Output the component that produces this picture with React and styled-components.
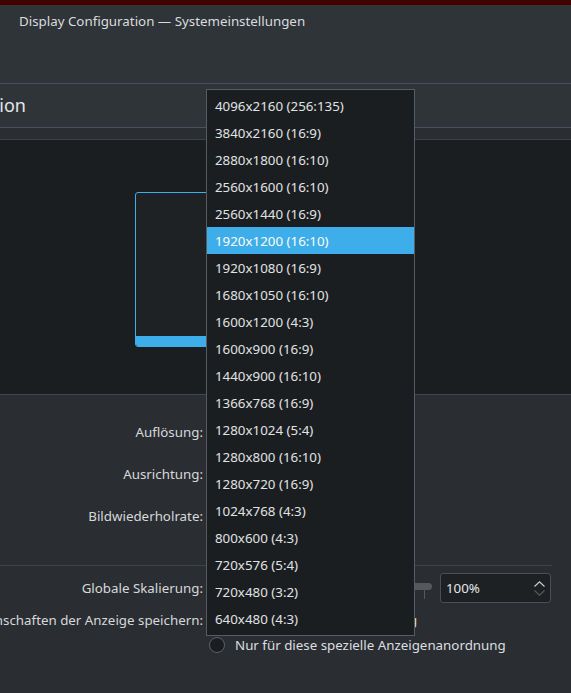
import React from 'react';
import styled, { createGlobalStyle } from 'styled-components';

const GlobalStyle = createGlobalStyle`
  html, body {
    margin: 0;
    padding: 0;
    background: #2a2e32;
    overflow: hidden;
  }
  body {
    font-family: 'Noto Sans', 'Open Sans', sans-serif;
    font-size: 13.33px;
    color: #dcdee0;
  }
`;

const Window = styled.div`
  position: relative;
  width: 571px;
  height: 693px;
  overflow: hidden;
  background: #2a2e32;
`;

const RedStrip = styled.div`
  height: 5px;
  background: #400000;
`;

const TitleBar = styled.div`
  height: 79px;
  box-sizing: border-box;
  background: #2f3438;
  border-bottom: 1px solid #4a5055;
  padding: 6px 0 0 19px;
`;

const Title = styled.div`
  font-size: 13.33px;
  line-height: 20px;
  color: #d9dbdd;
`;

const HeadingRow = styled.div`
  display: flex;
  align-items: center;
  height: 43px;
  background: #2f3438;
  border-bottom: 1px solid #4a5055;
`;

const HeadingClip = styled.div`
  flex: 0 0 26px;
  min-width: 0;
  display: flex;
  justify-content: flex-end;
  white-space: nowrap;
`;

const Heading = styled.div`
  flex: none;
  font-size: 18px;
  color: #e4e6e8;
  padding-bottom: 1px;
`;

const Band = styled.div`
  height: 11px;
  background: #2a2e32;
  border-bottom: 1px solid #3c4145;
`;

const Canvas = styled.div`
  height: 255px;
  box-sizing: border-box;
  background: #1b1e20;
  border-bottom: 1px solid #43484d;
  padding: 52px 0 0 135px;
`;

const Monitor = styled.div`
  width: 270px;
  height: 155px;
  box-sizing: border-box;
  border: 1px solid #3daee9;
  border-radius: 3px;
  background: #1f2225;
  display: flex;
  flex-direction: column;
  justify-content: flex-end;
  overflow: hidden;
`;

const MonitorBar = styled.div`
  height: 10px;
  background: #3daee9;
`;

const Form = styled.div`
  padding-top: 16px;
  display: flex;
  flex-direction: column;
`;

const Row = styled.div`
  display: flex;
  align-items: center;
  gap: 6px;
  height: ${(p) => p.h || 42}px;
  margin-top: ${(p) => p.mt || 0}px;
`;

const Label = styled.div`
  flex: 0 0 203px;
  min-width: 0;
  display: flex;
  justify-content: flex-end;
  white-space: nowrap;
  color: #d6d8da;
`;

const LabelText = styled.span`
  flex: none;
`;

const Divider = styled.div`
  width: 552px;
  height: 1px;
  background: #3e4347;
  margin-top: 28px;
`;

const Controls = styled.div`
  display: flex;
  align-items: center;
  gap: 8px;
`;

const Slider = styled.div`
  width: 223px;
  height: 30px;
  padding-top: 10px;
  box-sizing: border-box;
  display: flex;
  flex-direction: column;
`;

const Groove = styled.div`
  height: 7px;
  border-radius: 4px;
  background: #55595d;
`;

const Ticks = styled.div`
  display: flex;
  justify-content: space-between;
  padding: 0 7px 0 8px;
`;

const Tick = styled.div`
  width: 1px;
  height: 9px;
  background: #55595d;
`;

const SpinBox = styled.div`
  width: 111px;
  height: 30px;
  box-sizing: border-box;
  border: 1px solid #4a4f54;
  border-radius: 3px;
  background: #1e2124;
  display: flex;
  align-items: center;
  justify-content: space-between;
  padding: 0 5px;
  color: #e4e6e8;
`;

const Arrows = styled.div`
  display: flex;
  flex-direction: column;
  gap: 3px;
`;

const Radio = styled.label`
  flex: none;
  display: flex;
  align-items: center;
  gap: 10px;
  white-space: nowrap;
  color: #dcdee0;
`;

const RadioDot = styled.span`
  width: 16px;
  height: 16px;
  box-sizing: border-box;
  border-radius: 50%;
  border: 1px solid #5d6165;
  background: #1b1e20;
`;

const Popup = styled.div`
  position: absolute;
  left: 206px;
  top: 89px;
  width: 209px;
  box-sizing: border-box;
  background: #1b1e20;
  border: 1px solid #575c61;
  padding: 2px 0 3px;
`;

const Item = styled.div`
  height: 27px;
  display: flex;
  align-items: center;
  padding-left: 8px;
  white-space: nowrap;
  color: ${(p) => (p.selected ? '#fcfcfc' : '#e0e2e4')};
  background: ${(p) => (p.selected ? '#3daee9' : 'transparent')};
`;

const resolutions = [
  '4096x2160 (256:135)',
  '3840x2160 (16:9)',
  '2880x1800 (16:10)',
  '2560x1600 (16:10)',
  '2560x1440 (16:9)',
  '1920x1200 (16:10)',
  '1920x1080 (16:9)',
  '1680x1050 (16:10)',
  '1600x1200 (4:3)',
  '1600x900 (16:9)',
  '1440x900 (16:10)',
  '1366x768 (16:9)',
  '1280x1024 (5:4)',
  '1280x800 (16:10)',
  '1280x720 (16:9)',
  '1024x768 (4:3)',
  '800x600 (4:3)',
  '720x576 (5:4)',
  '720x480 (3:2)',
  '640x480 (4:3)',
];

const Chevron = ({ up, color }) => (
  <svg width="11" height="6" viewBox="0 0 11 6">
    <path
      d={up ? 'M0.5 5.5 L5.5 0.8 L10.5 5.5' : 'M0.5 0.5 L5.5 5.2 L10.5 0.5'}
      fill="none"
      stroke={color}
      strokeWidth="1.2"
    />
  </svg>
);

function App() {
  return (
    <>
      <GlobalStyle />
      <Window>
        <RedStrip />
        <TitleBar>
          <Title>Display Configuration — Systemeinstellungen</Title>
        </TitleBar>
        <HeadingRow>
          <HeadingClip>
            <Heading>Display Configuration</Heading>
          </HeadingClip>
        </HeadingRow>
        <Band />
        <Canvas>
          <Monitor>
            <MonitorBar />
          </Monitor>
        </Canvas>

        <Form>
          <Row>
            <Label>
              <LabelText>Auflösung:</LabelText>
            </Label>
          </Row>
          <Row>
            <Label>
              <LabelText>Ausrichtung:</LabelText>
            </Label>
          </Row>
          <Row>
            <Label>
              <LabelText>Bildwiederholrate:</LabelText>
            </Label>
          </Row>
          <Divider />
          <Row h={30} mt={7}>
            <Label>
              <LabelText>Globale Skalierung:</LabelText>
            </Label>
            <Controls>
              <Slider>
                <Groove />
                <Ticks>
                  <Tick />
                  <Tick />
                  <Tick />
                  <Tick />
                  <Tick />
                </Ticks>
              </Slider>
              <SpinBox>
                <span>100%</span>
                <Arrows>
                  <Chevron up color="#c8cacc" />
                  <Chevron color="#56595c" />
                </Arrows>
              </SpinBox>
            </Controls>
          </Row>
          <Row h={26} mt={4}>
            <Label>
              <LabelText>Eigenschaften der Anzeige speichern:</LabelText>
            </Label>
            <Radio>
              <RadioDot />
              Für jede Anzeigenanordnung
            </Radio>
          </Row>
          <Row h={24}>
            <Label />
            <Radio>
              <RadioDot />
              Nur für diese spezielle Anzeigenanordnung
            </Radio>
          </Row>
        </Form>

        <Popup>
          {resolutions.map((r, i) => (
            <Item key={r} selected={i === 5}>
              {r}
            </Item>
          ))}
        </Popup>
      </Window>
    </>
  );
}

export default App;
